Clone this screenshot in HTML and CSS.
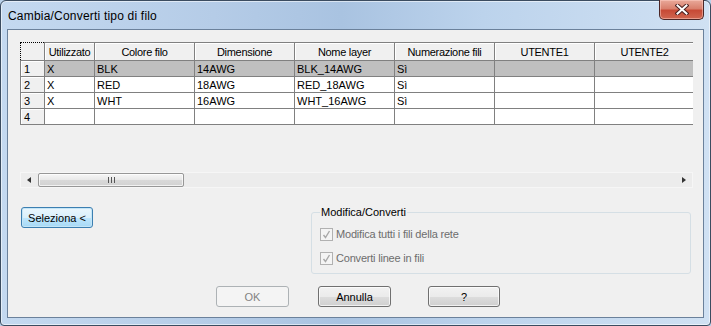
FILE: index.html
```html
<!DOCTYPE html>
<html lang="it">
<head>
  <meta charset="UTF-8">
  <title>Cambia/Converti tipo di filo</title>
  <link rel="stylesheet" href="styles.css">
</head>
<body>
  <div class="window">
    <div class="titlebar">
      <span class="title">Cambia/Converti tipo di filo</span>
      <button class="close-btn" aria-label="Chiudi">
        <svg width="14" height="11" viewBox="0 0 14 11">
          <path d="M2.5 1.5 L11.5 9.5 M11.5 1.5 L2.5 9.5" stroke="#4a2020" stroke-width="4" stroke-linecap="square"/>
          <path d="M2.5 1.5 L11.5 9.5 M11.5 1.5 L2.5 9.5" stroke="#fff" stroke-width="2" stroke-linecap="square"/>
        </svg>
      </button>
    </div>

    <div class="client">
      <!-- Wire grid -->
      <div class="grid">
        <div class="grid-view">
          <table class="wires">
            <colgroup>
              <col class="c-num"><col class="c-used"><col class="c-wide"><col class="c-wide">
              <col class="c-wide"><col class="c-wide"><col class="c-wide"><col class="c-wide">
            </colgroup>
            <thead>
              <tr>
                <th class="corner"></th>
                <th>Utilizzato</th>
                <th>Colore filo</th>
                <th>Dimensione</th>
                <th>Nome layer</th>
                <th>Numerazione fili</th>
                <th>UTENTE1</th>
                <th>UTENTE2</th>
              </tr>
            </thead>
            <tbody>
              <tr class="selected">
                <th>1</th><td>X</td><td>BLK</td><td>14AWG</td><td>BLK_14AWG</td><td>Sì</td><td></td><td></td>
              </tr>
              <tr>
                <th>2</th><td>X</td><td>RED</td><td>18AWG</td><td>RED_18AWG</td><td>Sì</td><td></td><td></td>
              </tr>
              <tr>
                <th>3</th><td>X</td><td>WHT</td><td>16AWG</td><td>WHT_16AWG</td><td>Sì</td><td></td><td></td>
              </tr>
              <tr>
                <th>4</th><td></td><td></td><td></td><td></td><td></td><td></td><td></td>
              </tr>
            </tbody>
          </table>
        </div>
        <div class="hscroll">
          <span class="arrow arrow-left"></span>
          <div class="track">
            <div class="thumb"><span class="grip"></span></div>
          </div>
          <span class="arrow arrow-right"></span>
        </div>
      </div>

      <!-- Select + options -->
      <div class="lower">
        <button class="btn btn-default">Seleziona &lt;</button>
        <fieldset class="group">
          <legend>Modifica/Converti</legend>
          <label class="check">
            <span class="box">
              <svg width="9" height="9" viewBox="0 0 9 9"><path d="M1.5 5 L3.5 7.5 L7.5 1" fill="none" stroke="#a8a8a8" stroke-width="1.4"/></svg>
            </span>
            Modifica tutti i fili della rete
          </label>
          <label class="check">
            <span class="box">
              <svg width="9" height="9" viewBox="0 0 9 9"><path d="M1.5 5 L3.5 7.5 L7.5 1" fill="none" stroke="#a8a8a8" stroke-width="1.4"/></svg>
            </span>
            Converti linee in fili
          </label>
        </fieldset>
      </div>

      <div class="actions">
        <button class="btn btn-ok" disabled>OK</button>
        <button class="btn btn-cancel">Annulla</button>
        <button class="btn btn-help">?</button>
      </div>
    </div>
  </div>
</body>
</html>
```

FILE: styles.css
```css
:root {
  --dialog-bg: #f0f0f0;
  --grid-line: #808080;
  --frame-dark: #3b4c60;
  --text-disabled: #6d6d6d;
}

* {
  box-sizing: border-box;
}

body {
  margin: 0;
  background: #b9d1ea;
  font-family: "Liberation Sans", Arial, sans-serif;
  font-size: 11px;
  color: #000;
}

.window {
  width: 711px;
  height: 326px;
  display: flex;
  flex-direction: column;
  padding: 0 6px 7px;
  border: 1px solid var(--frame-dark);
  border-radius: 6px 6px 4px 4px;
  background: linear-gradient(90deg, #c4d9f0 0%, #b5cce7 30%, #a9c3e1 48%, #bcd3ec 68%, #d0e1f3 100%);
  box-shadow: inset 0 0 0 1px rgba(255, 255, 255, 0.55);
}

/* title bar */
.titlebar {
  height: 28px;
  display: flex;
  justify-content: space-between;
  align-items: flex-start;
}

.title {
  margin: 8px 0 0 1px;
  font-size: 12px;
  letter-spacing: 0.2px;
  line-height: 14px;
}

.close-btn {
  width: 45px;
  height: 20px;
  margin: -1px 0 0 0;
  padding: 0;
  display: flex;
  align-items: center;
  justify-content: center;
  border: 1px solid #4b2626;
  border-top: none;
  border-radius: 0 0 5px 5px;
  background: linear-gradient(180deg, #e9a99a 0%, #d9806d 45%, #c74a36 55%, #d06650 100%);
  box-shadow: inset 0 0 0 1px rgba(255, 210, 200, 0.5);
}

/* client area */
.client {
  flex: 1;
  border: 1px solid #6b819b;
  background: var(--dialog-bg);
  padding: 12px 9px 0 12px;
}

.grid {
  width: 673px;
}

.grid-view {
  height: 130px;
  overflow: hidden;
}

.wires {
  width: 674px;
  table-layout: fixed;
  border-collapse: collapse;
}

.c-num { width: 24px; }
.c-used { width: 50px; }
.c-wide { width: 100px; }

.wires th,
.wires td {
  padding: 0 2px;
  height: 16px;
  line-height: 14px;
  font-weight: normal;
  text-align: left;
  white-space: nowrap;
  overflow: hidden;
  border: 1px solid var(--grid-line);
}

.wires td {
  background: #fff;
}

.wires thead th {
  height: 18px;
  text-align: center;
  letter-spacing: -0.3px;
  background: var(--dialog-bg);
  box-shadow: inset 1px 1px 0 #fff;
}

.wires thead th.corner {
  border: 1px dotted #000;
  box-shadow: none;
}

.wires tbody th {
  background: var(--dialog-bg);
  box-shadow: inset 1px 1px 0 #fff;
  padding-left: 3px;
}

.wires tr.selected td {
  background: #bfbfbf;
}

/* horizontal scrollbar */
.hscroll {
  height: 16px;
  display: flex;
  align-items: stretch;
  background: #ececec;
  border: 1px solid #f6f6f6;
}

.arrow {
  width: 16px;
  display: flex;
  align-items: center;
  justify-content: center;
}

.arrow::before {
  content: "";
  border-top: 3.5px solid transparent;
  border-bottom: 3.5px solid transparent;
}

.arrow-left::before {
  border-right: 4px solid #333;
}

.arrow-right::before {
  border-left: 4px solid #333;
}

.track {
  flex: 1;
  padding: 0 0 0 1px;
}

.thumb {
  width: 146px;
  height: 100%;
  display: flex;
  align-items: center;
  justify-content: center;
  border: 1px solid #979797;
  border-radius: 2px;
  background: linear-gradient(180deg, #f6f6f6 0%, #e8e8e8 50%, #d9d9d9 51%, #d2d2d2 100%);
  box-shadow: inset 0 0 0 1px rgba(255, 255, 255, 0.7);
}

.grip {
  width: 7px;
  height: 6px;
  background: linear-gradient(90deg, #555 0 1px, transparent 1px 3px, #555 3px 4px, transparent 4px 6px, #555 6px 7px);
}

/* lower section */
.lower {
  width: 673px;
  margin-top: 17px;
  display: flex;
  justify-content: space-between;
  align-items: flex-start;
}

.btn {
  width: 73px;
  height: 21px;
  padding: 0;
  font-family: inherit;
  font-size: 11px;
  color: #000;
  border: 1px solid #707070;
  border-radius: 3px;
  background: linear-gradient(180deg, #f2f2f2 0%, #ebebeb 50%, #dddddd 51%, #cfcfcf 100%);
  box-shadow: inset 0 0 0 1px rgba(255, 255, 255, 0.7);
}

.btn-default {
  width: 72px;
  margin: 2px 0 0 1px;
  border-color: #3c7fb1;
  background: linear-gradient(180deg, #eaf6fd 0%, #d9f0fc 50%, #bee6fd 51%, #a7d9f5 100%);
  box-shadow: inset 0 0 0 1px #c4e5f6;
}

.btn:disabled {
  color: #838383;
  border-color: #adb2b5;
  background: #f4f4f4;
  box-shadow: none;
}

.group {
  width: 380px;
  margin: 0 2px 0 0;
  padding: 2px 8px 3px;
  border: 1px solid #d5dfe5;
  border-radius: 3px;
}

.group legend {
  padding: 0 1px;
  font-size: 11px;
  line-height: 15px;
}

.check {
  height: 24px;
  display: flex;
  align-items: center;
  gap: 3px;
  color: var(--text-disabled);
  letter-spacing: -0.2px;
}

.box {
  width: 13px;
  height: 13px;
  display: flex;
  align-items: center;
  justify-content: center;
  border: 1px solid #b1b1b1;
  background: #f4f4f4;
}

/* dialog buttons */
.actions {
  margin-top: 12px;
  padding-left: 196px;
  display: flex;
}

.btn-cancel {
  margin-left: 29px;
}

.btn-help {
  width: 72px;
  margin-left: 37px;
}
```
